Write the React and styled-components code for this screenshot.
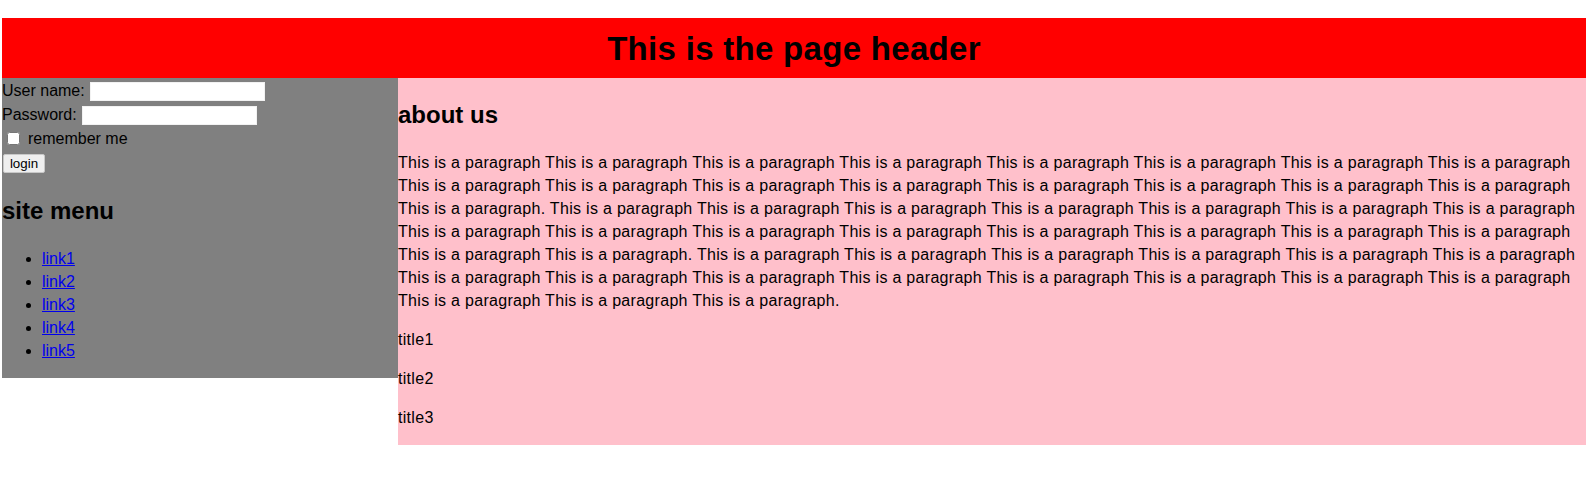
import React from "react";
import styled, { createGlobalStyle } from "styled-components";

const GlobalStyle = createGlobalStyle`
  html, body {
    margin: 0;
    padding: 0;
    background: white;
  }
  body {
    font-family: "Comic Sans MS", "Liberation Sans", sans-serif;
    font-size: 16px;
    color: black;
  }
`;

const Page = styled.div`
  width: 1584px;
  padding: 18px 0 0 2px;
`;

const Header = styled.header`
  height: 60px;
  background-color: red;
  display: flex;
  align-items: center;
  justify-content: center;
`;

const HeaderTitle = styled.h1`
  margin: 0;
  font-size: 33px;
  font-weight: 700;
  line-height: 1;
  letter-spacing: 0.3px;
`;

const Columns = styled.div`
  display: flex;
  align-items: flex-start;
`;

const Sidebar = styled.aside`
  width: 396px;
  background-color: gray;
  line-height: 23px;
`;

const LoginForm = styled.form`
  display: flex;
  flex-direction: column;
`;

const FieldRow = styled.label`
  display: flex;
  align-items: center;
  height: 24px;
  gap: 5px;
`;

const TextInput = styled.input`
  width: 175px;
  height: 19px;
  box-sizing: border-box;
  border: 1px solid #f2f2f2;
  background: white;
  padding: 0 2px;
  margin-top: 3px;
`;

const CheckRow = styled.label`
  display: flex;
  align-items: center;
  height: 23px;
  gap: 8px;
  padding-left: 5px;
  margin-top: 1px;
`;

const CheckBox = styled.input`
  width: 13px;
  height: 13px;
  margin: 0;
`;

const LoginButton = styled.button`
  align-self: flex-start;
  width: 42px;
  height: 19px;
  margin: 4px 0 0 1px;
  padding: 0;
  font-family: "Liberation Sans", sans-serif;
  font-size: 13.33px;
  background: #efefef;
  border: 1px solid #c8c8c8;
  border-radius: 2px;
  color: black;
`;

const SectionTitle = styled.h2`
  font-size: 24px;
  font-weight: 700;
  line-height: 33px;
  margin: ${(p) => p.$top ?? 20}px 0 20px;
`;

const LinkList = styled.ul`
  margin: 0;
  padding: 0 0 16px 40px;
`;

const LinkItem = styled.li`
  line-height: 23px;
`;

const MenuLink = styled.a`
  color: #0000ee;
  text-decoration: underline;
`;

const Content = styled.main`
  flex: 1;
  background-color: pink;
  display: flow-root;
  line-height: 23px;
`;

const Paragraph = styled.p`
  margin: 16px 0;
  letter-spacing: 0.3px;
`;

const phrase = "This is a paragraph";
const sentence = Array(17).fill(phrase).join(" ") + ".";
const body = [sentence, sentence, sentence].join(" ");

const links = ["link1", "link2", "link3", "link4", "link5"];
const titles = ["title1", "title2", "title3"];

function App() {
  return (
    <>
      <GlobalStyle />
      <Page>
        <Header>
          <HeaderTitle>This is the page header</HeaderTitle>
        </Header>
        <Columns>
          <Sidebar>
            <LoginForm onSubmit={(e) => e.preventDefault()}>
              <FieldRow>
                User name: <TextInput type="text" />
              </FieldRow>
              <FieldRow>
                Password: <TextInput type="password" />
              </FieldRow>
              <CheckRow>
                <CheckBox type="checkbox" /> remember me
              </CheckRow>
              <LoginButton type="submit">login</LoginButton>
            </LoginForm>
            <SectionTitle $top={21}>site menu</SectionTitle>
            <LinkList>
              {links.map((l) => (
                <LinkItem key={l}>
                  <MenuLink href="#">{l}</MenuLink>
                </LinkItem>
              ))}
            </LinkList>
          </Sidebar>
          <Content>
            <SectionTitle>about us</SectionTitle>
            <Paragraph>{body}</Paragraph>
            {titles.map((t) => (
              <Paragraph key={t}>{t}</Paragraph>
            ))}
          </Content>
        </Columns>
      </Page>
    </>
  );
}

export default App;
